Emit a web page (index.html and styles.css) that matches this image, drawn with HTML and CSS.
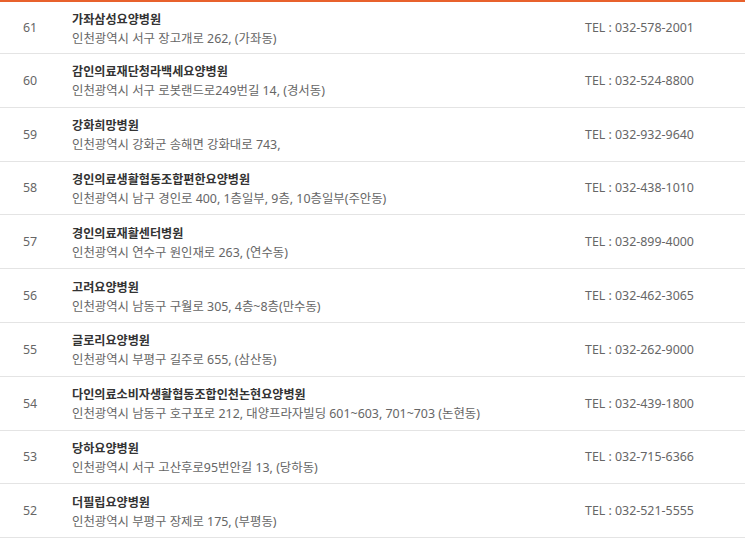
FILE: index.html
```html
<!DOCTYPE html>
<html>
<head>
  <title>요양병원 목록</title>
  <link rel="stylesheet" href="styles.css">
</head>
<body>
  <table id="hospitalTable">
    <tr>
      <td class="num">61</td>
      <td class="info"><p class="name">가좌삼성요양병원</p><p class="addr">인천광역시 서구 장고개로 262, (가좌동)</p></td>
      <td class="tel">TEL : 032-578-2001</td>
    </tr>
    <tr>
      <td class="num">60</td>
      <td class="info"><p class="name">감인의료재단청라백세요양병원</p><p class="addr">인천광역시 서구 로봇랜드로249번길 14, (경서동)</p></td>
      <td class="tel">TEL : 032-524-8800</td>
    </tr>
    <tr>
      <td class="num">59</td>
      <td class="info"><p class="name">강화희망병원</p><p class="addr">인천광역시 강화군 송해면 강화대로 743,</p></td>
      <td class="tel">TEL : 032-932-9640</td>
    </tr>
    <tr>
      <td class="num">58</td>
      <td class="info"><p class="name">경인의료생활협동조합편한요양병원</p><p class="addr">인천광역시 남구 경인로 400, 1층일부, 9층, 10층일부(주안동)</p></td>
      <td class="tel">TEL : 032-438-1010</td>
    </tr>
    <tr>
      <td class="num">57</td>
      <td class="info"><p class="name">경인의료재활센터병원</p><p class="addr">인천광역시 연수구 원인재로 263, (연수동)</p></td>
      <td class="tel">TEL : 032-899-4000</td>
    </tr>
    <tr>
      <td class="num">56</td>
      <td class="info"><p class="name">고려요양병원</p><p class="addr">인천광역시 남동구 구월로 305, 4층~8층(만수동)</p></td>
      <td class="tel">TEL : 032-462-3065</td>
    </tr>
    <tr>
      <td class="num">55</td>
      <td class="info"><p class="name">글로리요양병원</p><p class="addr">인천광역시 부평구 길주로 655, (삼산동)</p></td>
      <td class="tel">TEL : 032-262-9000</td>
    </tr>
    <tr>
      <td class="num">54</td>
      <td class="info"><p class="name">다인의료소비자생활협동조합인천논현요양병원</p><p class="addr">인천광역시 남동구 호구포로 212, 대양프라자빌딩 601~603, 701~703 (논현동)</p></td>
      <td class="tel">TEL : 032-439-1800</td>
    </tr>
    <tr>
      <td class="num">53</td>
      <td class="info"><p class="name">당하요양병원</p><p class="addr">인천광역시 서구 고산후로95번안길 13, (당하동)</p></td>
      <td class="tel">TEL : 032-715-6366</td>
    </tr>
    <tr>
      <td class="num">52</td>
      <td class="info"><p class="name">더필립요양병원</p><p class="addr">인천광역시 부평구 장제로 175, (부평동)</p></td>
      <td class="tel">TEL : 032-521-5555</td>
    </tr>
  </table>
</body>
</html>
```

FILE: styles.css
```css
body {
  font-family: "Noto Sans", "Noto Sans CJK KR", sans-serif;
  margin: 0;
  background: #fff;
}

#hospitalTable {
  border-collapse: collapse;
  width: 100%;
  border-top: 2px solid #e8612c;
}

#hospitalTable td {
  height: 52.8px;
  padding: 0;
  border-bottom: 1px solid #e4e4e4;
  font-size: 12.4px;
  color: #666;
  vertical-align: middle;
}

#hospitalTable tr:first-child td {
  height: 51px;
}

.num {
  width: 72px;
  padding-left: 23px !important;
  box-sizing: border-box;
}

#hospitalTable .info {
  padding-top: 2px;
  height: 50.8px;
}

#hospitalTable tr:first-child .info {
  height: 49px;
}

.info p {
  margin: 0;
  line-height: 19px;
}

.name {
  font-weight: bold;
  font-size: 12.1px;
  color: #333;
}

.addr {
  color: #666;
}

.tel {
  width: 160px;
  color: #5f5f5f;
}
```
